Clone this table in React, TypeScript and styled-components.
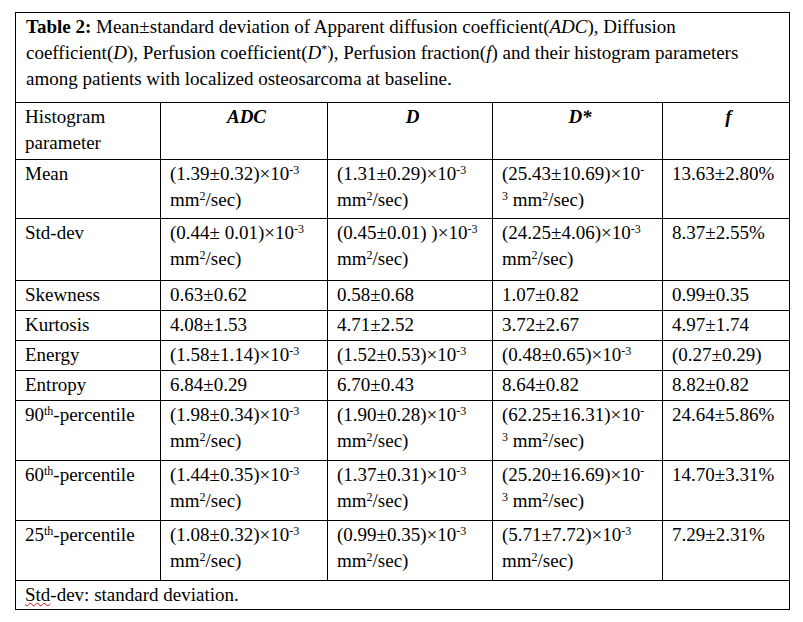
import styled, { createGlobalStyle } from 'styled-components';

const GlobalStyle = createGlobalStyle`
  body {
    margin: 0;
    background: #ffffff;
  }
`;

type Val = {
  base: string;
  exp?: boolean;
  unit?: boolean;
  split?: boolean;
};

type Row = {
  label: string;
  th?: string;
  height: number;
  values: (string | Val)[];
};

const rows: Row[] = [
  {
    label: 'Mean',
    height: 59,
    values: [
      { base: '(1.39±0.32)', exp: true, unit: true },
      { base: '(1.31±0.29)', exp: true, unit: true },
      { base: '(25.43±10.69)', exp: true, unit: true, split: true },
      '13.63±2.80%',
    ],
  },
  {
    label: 'Std-dev',
    height: 62,
    values: [
      { base: '(0.44± 0.01)', exp: true, unit: true },
      { base: '(0.45±0.01) )', exp: true, unit: true },
      { base: '(24.25±4.06)', exp: true, unit: true },
      '8.37±2.55%',
    ],
  },
  { label: 'Skewness', height: 30, values: ['0.63±0.62', '0.58±0.68', '1.07±0.82', '0.99±0.35'] },
  { label: 'Kurtosis', height: 30, values: ['4.08±1.53', '4.71±2.52', '3.72±2.67', '4.97±1.74'] },
  {
    label: 'Energy',
    height: 30,
    values: [
      { base: '(1.58±1.14)', exp: true },
      { base: '(1.52±0.53)', exp: true },
      { base: '(0.48±0.65)', exp: true },
      '(0.27±0.29)',
    ],
  },
  { label: 'Entropy', height: 30, values: ['6.84±0.29', '6.70±0.43', '8.64±0.82', '8.82±0.82'] },
  {
    label: '90',
    th: 'th',
    height: 60,
    values: [
      { base: '(1.98±0.34)', exp: true, unit: true },
      { base: '(1.90±0.28)', exp: true, unit: true },
      { base: '(62.25±16.31)', exp: true, unit: true, split: true },
      '24.64±5.86%',
    ],
  },
  {
    label: '60',
    th: 'th',
    height: 60,
    values: [
      { base: '(1.44±0.35)', exp: true, unit: true },
      { base: '(1.37±0.31)', exp: true, unit: true },
      { base: '(25.20±16.69)', exp: true, unit: true, split: true },
      '14.70±3.31%',
    ],
  },
  {
    label: '25',
    th: 'th',
    height: 60,
    values: [
      { base: '(1.08±0.32)', exp: true, unit: true },
      { base: '(0.99±0.35)', exp: true, unit: true },
      { base: '(5.71±7.72)', exp: true, unit: true },
      '7.29±2.31%',
    ],
  },
];

function Value({ v }: { v: string | Val }) {
  if (typeof v === 'string') return <>{v}</>;
  if (v.split) {
    return (
      <>
        {v.base}×10<Sup>-</Sup>
        <br />
        <Sup>3</Sup> mm<Sup>2</Sup>/sec)
      </>
    );
  }
  return (
    <>
      {v.base}
      {v.exp && (
        <>
          ×10<Sup>-3</Sup>
        </>
      )}
      {v.unit && (
        <>
          <br />
          mm<Sup>2</Sup>/sec)
        </>
      )}
    </>
  );
}

function App() {
  return (
    <>
      <GlobalStyle />
      <Page>
        <Table>
          <colgroup>
            <col style={{ width: 145 }} />
            <col style={{ width: 167 }} />
            <col style={{ width: 165 }} />
            <col style={{ width: 170 }} />
            <col style={{ width: 127 }} />
          </colgroup>
          <tbody>
            <tr>
              <Caption colSpan={5}>
                <b>Table 2:</b> Mean±standard deviation of Apparent diffusion coefficient(<i>ADC</i>),
                Diffusion coefficient(<i>D</i>), Perfusion coefficient(<i>D</i>
                <Sup>*</Sup>), Perfusion fraction(<i>f</i>) and their histogram parameters among
                patients with localized osteosarcoma at baseline.
              </Caption>
            </tr>
            <BodyRow $h={57}>
              <Cell>
                Histogram
                <br />
                parameter
              </Cell>
              <HeadCell>ADC</HeadCell>
              <HeadCell>D</HeadCell>
              <HeadCell>D*</HeadCell>
              <HeadCell>f</HeadCell>
            </BodyRow>
            {rows.map((r) => (
              <BodyRow key={r.label} $h={r.height}>
                <Cell>
                  {r.label}
                  {r.th && (
                    <>
                      <Sup>{r.th}</Sup>-percentile
                    </>
                  )}
                </Cell>
                {r.values.map((v, i) => (
                  <Cell key={i}>
                    <Value v={v} />
                  </Cell>
                ))}
              </BodyRow>
            ))}
            <BodyRow $h={29}>
              <Cell colSpan={5}>
                <Spell>Std</Spell>-dev: standard deviation.
              </Cell>
            </BodyRow>
          </tbody>
        </Table>
      </Page>
    </>
  );
}

export default App;

const Page = styled.div`
  padding: 12px 0 0 15px;
  font-family: 'Liberation Serif', 'Times New Roman', serif;
  font-size: 19px;
  line-height: 26px;
  color: #000;
`;

const Table = styled.table`
  width: 774px;
  table-layout: fixed;
  border-collapse: collapse;
  border: 1px solid #000;
`;

const Caption = styled.td`
  height: 88px;
  padding: 1px 8px 0 10px;
  vertical-align: top;
  border: 1px solid #000;
`;

const BodyRow = styled.tr<{ $h: number }>`
  height: ${(p) => p.$h}px;
`;

const Cell = styled.td`
  padding: 1px 4px 0 9px;
  vertical-align: top;
  text-align: left;
  border: 1px solid #000;
  white-space: nowrap;
`;

const HeadCell = styled(Cell)`
  text-align: center;
  font-weight: bold;
  font-style: italic;
`;

const Sup = styled.sup`
  font-size: 12px;
  line-height: 12px;
  vertical-align: 6px;
`;

const Spell = styled.span`
  text-decoration: underline wavy #d0021b;
  text-decoration-thickness: 1px;
  text-underline-offset: 1px;
`;
